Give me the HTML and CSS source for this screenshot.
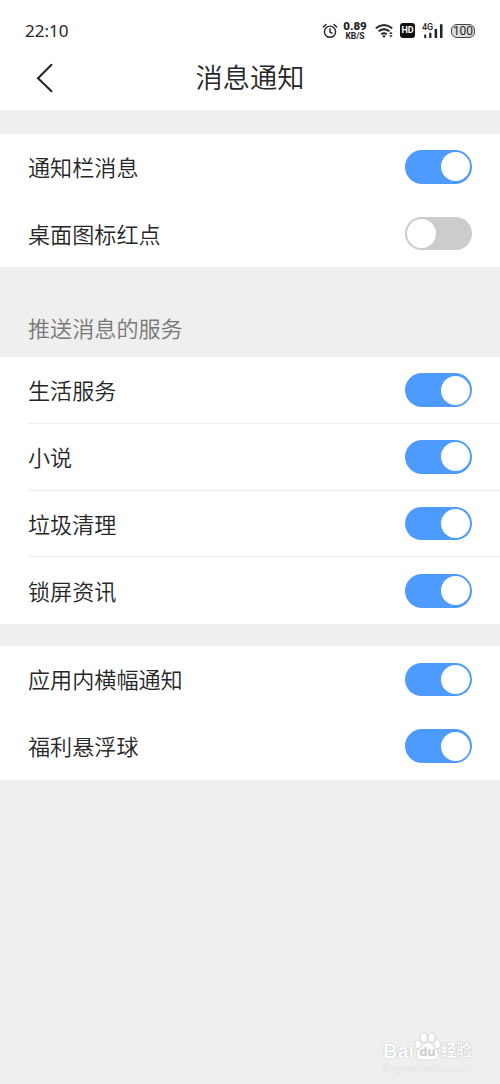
FILE: index.html
```html
<!DOCTYPE html>
<html lang="zh-CN">
<head>
<meta charset="utf-8">
<title>消息通知</title>
<link rel="stylesheet" href="styles.css">
</head>
<body>
<div class="screen">
  <header class="top">
    <div class="status">
      <span class="clock">22:10</span>
      <div class="indicators">
        <svg class="alarm" width="16" height="16" viewBox="0 0 16 16" fill="none" stroke="#222" stroke-width="1.4" stroke-linecap="round"><circle cx="8" cy="8.7" r="5.6"/><path d="M8 5.6V9l2 1.2M1.3 4 4 1.5M12 1.5 14.7 4"/></svg>
        <div class="speed"><b>0.89</b><small>KB/S</small></div>
        <svg class="wifi" width="20" height="16" viewBox="0 0 20 16" fill="none" stroke="#222" stroke-width="1.9"><path d="M.8 5.2Q9 -1.400 17.200 5.200M3.600 8.300Q9 4 14.400 8.300M6.300 11.200Q9 9.200 11.700 11.200"/><path fill="#222" stroke="none" d="M7.200 12.800Q9 11.600 10.800 12.800L9 15zM14.200 10.900l1.700-2.200 1.700 2.200zM14.200 12.300h3.400l-1.700 2.200z"/></svg>
        <span class="hd">HD</span>
        <div class="signal">
          <span class="gen">4G</span>
          <svg width="21" height="16" viewBox="0 0 21 16" fill="#222"><path d="M2.200 11.500h2V15h-2zM7.200 9.800h2.200V15H7.200zM12.600 6h2.500v9h-2.500zM18 1.200h2.500V15H18z"/></svg>
        </div>
        <span class="battery">100</span>
      </div>
    </div>
    <div class="nav">
      <svg class="back" width="18" height="30" viewBox="0 0 18 30" fill="none" stroke="#222" stroke-width="2" stroke-linecap="round"><path d="M15.500 1.700 2 15.200 15.500 28.200"/></svg>
      <h1>消息通知</h1>
    </div>
  </header>

  <section class="group">
    <div class="row"><span>通知栏消息</span><i class="switch on"></i></div>
    <div class="row"><span>桌面图标红点</span><i class="switch"></i></div>
  </section>

  <h2>推送消息的服务</h2>
  <section class="group lined">
    <div class="row"><span>生活服务</span><i class="switch on"></i></div>
    <div class="row"><span>小说</span><i class="switch on"></i></div>
    <div class="row"><span>垃圾清理</span><i class="switch on"></i></div>
    <div class="row"><span>锁屏资讯</span><i class="switch on"></i></div>
  </section>

  <section class="group last">
    <div class="row"><span>应用内横幅通知</span><i class="switch on"></i></div>
    <div class="row"><span>福利悬浮球</span><i class="switch on"></i></div>
  </section>

  <footer class="watermark">
    <div class="brand">
      <span class="bai">Bai</span>
      <span class="paw">
        <svg width="27" height="29" viewBox="0 0 27 29" fill="#fff" stroke="#d0d0d0" stroke-width=".8"><ellipse cx="4" cy="12.300" rx="3.200" ry="4.200"/><ellipse cx="9.800" cy="5.500" rx="3.400" ry="4.600"/><ellipse cx="17.600" cy="5.500" rx="3.400" ry="4.600"/><ellipse cx="23.200" cy="12.300" rx="3.200" ry="4.200"/><path d="M13.500 10.500c4 0 5 3.600 8.500 6.200 4 3 3.400 11-2.200 11.400H7.200C1.600 27.800 1 19.700 5 16.700 8.500 14.100 9.500 10.500 13.500 10.500z"/></svg>
        <em>du</em>
      </span>
      <span class="exp">经验</span>
    </div>
    <div class="site">jingyan.baidu.com</div>
  </footer>
</div>
</body>
</html>
```
FILE: styles.css
```css
* { box-sizing: border-box; }
body { margin: 0; background: #efefef; color: #262626; font-family: "Noto Sans", "Noto Sans CJK SC", sans-serif; }
.screen { width: 500px; height: 1084px; display: flex; flex-direction: column; overflow: hidden; }
.top { height: 110px; background: #fff; margin-bottom: 24px; }
.status { height: 50px; padding: 11px 25px 0; display: flex; align-items: center; justify-content: space-between; }
.clock { font-size: 17px; line-height: 24px; }
.indicators { display: flex; align-items: center; height: 22px; color: #222; }
.speed { display: flex; flex-direction: column; align-items: center; gap: 1px; width: 24px; margin: 0 8px 0 5px; padding-top: 1px; font-family: Roboto, sans-serif; font-weight: 700; }
.speed b { font-size: 11.5px; line-height: 10px; }
.speed small { font-size: 8.5px; line-height: 9px; }
.hd { width: 15px; height: 15px; margin: 0 7px 0 5px; border-radius: 3px; background: #111; color: #fff; font: 700 9px/15px Roboto, sans-serif; text-align: center; }
.signal { position: relative; height: 16px; margin-right: 8px; }
.signal svg { display: block; }
.gen { position: absolute; left: 0; top: 0; font: 500 9px/9px Roboto, sans-serif; }
.battery { width: 24px; height: 14px; border: 1.5px solid #444; border-radius: 6px; background: #ddd; font: 12px/12px Roboto, sans-serif; display: flex; justify-content: center; }
.nav { height: 56px; display: grid; grid-template-columns: 36px 1fr 36px; align-items: center; padding: 0 34px 0 36px; }
h1 { margin: 0; font-size: 27.2px; font-weight: 350; line-height: 42px; text-align: center; transform: translateX(-1px); }
.group { background: #fff; }
.row { height: 66.7px; margin-left: 28px; padding: 0 28px 1px 0; display: flex; align-items: center; justify-content: space-between; font-size: 22.1px; font-weight: 350; line-height: 32px; }
.lined .row:not(:last-child) { border-bottom: 1px solid #eee; }
.lined .row { padding-bottom: 0; }
.last { margin-top: 22px; }
.last .row { padding-bottom: 0; }
h2 { height: 90px; margin: 0; padding: 45px 28px 0; color: #777; font-size: 22.1px; font-weight: 350; line-height: 32px; }
.switch { width: 67px; height: 33.5px; padding: 2px; border-radius: 17px; background: #ccc; display: flex; align-items: center; }
.switch::before { content: ""; width: 29px; height: 29px; border-radius: 50%; background: #fff; }
.on { background: #4d9bff; justify-content: flex-end; }
.watermark { width: 91px; margin: auto 26px 9px auto; color: #fff; text-shadow: 0 0 1px #aaa, 0 0 1px #bbb; }
.brand { display: flex; align-items: flex-end; height: 29px; }
.bai { width: 31px; font: 700 20px/20px "Liberation Sans", sans-serif; }
.paw { position: relative; width: 27px; height: 29px; }
.paw svg { display: block; }
.paw em { position: absolute; left: 0; right: 0; bottom: 2px; color: #c8c8c8; font: 700 13px/14px "Liberation Sans", sans-serif; text-align: center; text-shadow: none; }
.exp { font-size: 15.5px; font-weight: 700; line-height: 21px; }
.site { color: #f2f2f2; font: 10.8px/14px "Liberation Sans", sans-serif; text-shadow: 0 0 1px #ccc; }
```
